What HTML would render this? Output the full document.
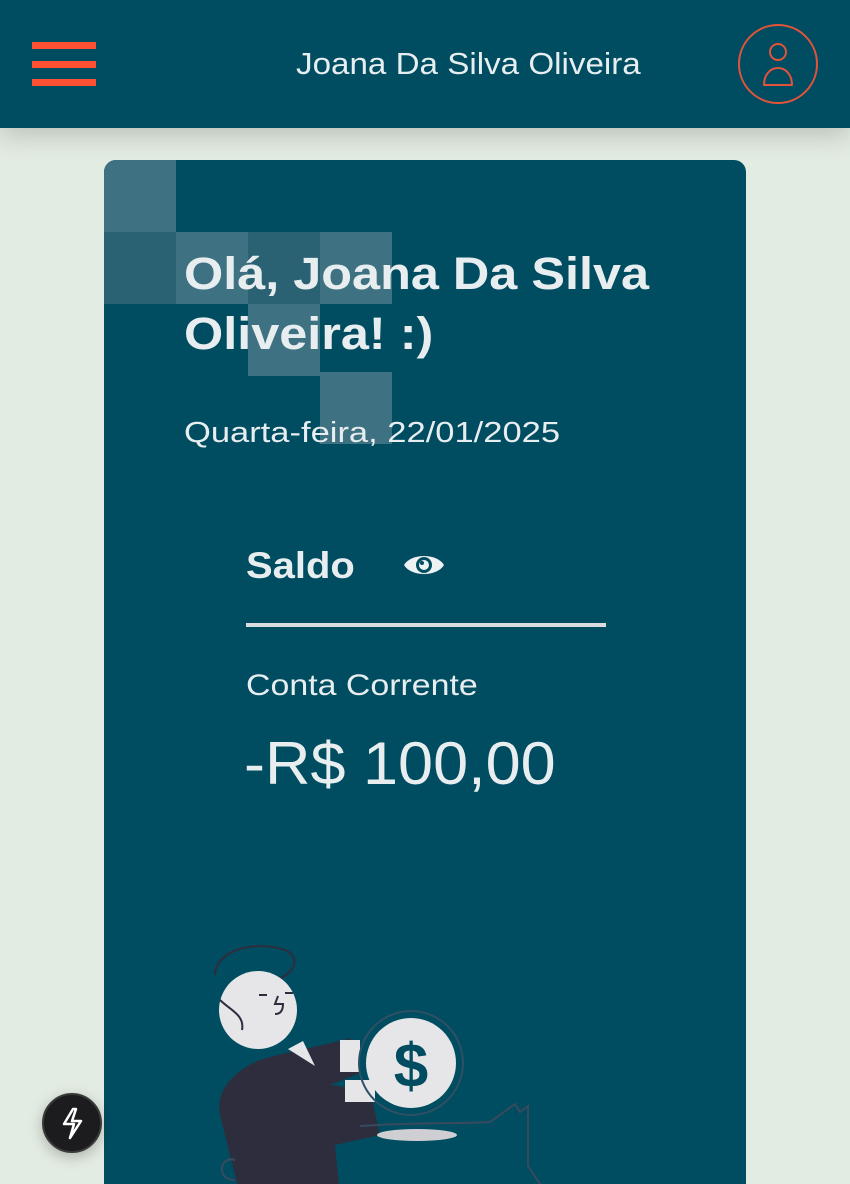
<!DOCTYPE html>
<html><head><meta charset="utf-8"><style>
*{margin:0;padding:0;box-sizing:border-box}
html,body{width:850px;height:1184px;overflow:hidden}
body{background:#e3ece3;font-family:"Liberation Sans",sans-serif;position:relative}
.hdr{position:absolute;left:0;top:0;width:850px;height:128px;background:#004d61;box-shadow:0 8px 24px rgba(0,0,0,.18);z-index:2}
.bar{position:absolute;left:32px;width:64px;height:7px;background:#ff5031}
.name{position:absolute;left:296px;top:46px;color:#e6eef0;font-size:31px;transform:scaleX(1.07);transform-origin:left}
.card{position:absolute;left:104px;top:160px;width:642px;height:1024px;background:#004d61;border-radius:12px 12px 0 0;overflow:hidden}
.sq{position:absolute;width:72px;height:72px}
.l{background:#3e7282}.d{background:#2a6273}
.t{position:absolute;color:#e8eef0;white-space:nowrap;transform-origin:left}
</style></head><body>
<div class="hdr">
<div class="bar" style="top:42px"></div><div class="bar" style="top:61px"></div><div class="bar" style="top:79px"></div>
<div class="name">Joana Da Silva Oliveira</div>
<svg style="position:absolute;left:737px;top:23px" width="82" height="82" viewBox="0 0 82 82" fill="none" stroke="#e2533a" stroke-width="2"><circle cx="41" cy="41" r="39"/><circle cx="41" cy="29" r="8"/><path d="M27 62c0-10 6-17 14-17s14 7 14 17z" stroke-linejoin="round"/></svg>
</div>
<div class="card">
<div class="sq l" style="left:0;top:0"></div>
<div class="sq d" style="left:0;top:72px"></div>
<div class="sq l" style="left:72px;top:72px"></div>
<div class="sq d" style="left:144px;top:72px"></div>
<div class="sq l" style="left:216px;top:72px"></div>
<div class="sq l" style="left:144px;top:144px"></div>
<div class="sq l" style="left:216px;top:212px"></div>
<div class="t" style="left:80px;top:84px;font-size:45px;font-weight:bold;line-height:60px;transform:scaleX(1.12)">Olá, Joana Da Silva<br>Oliveira! :)</div>
<div class="t" style="left:80px;top:257px;font-size:29px;transform:scaleX(1.19)">Quarta-feira, 22/01/2025</div>
<div class="t" style="left:142px;top:385px;font-size:37px;font-weight:bold;transform:scaleX(1.08)">Saldo</div>
<svg style="position:absolute;left:299px;top:390px" width="42" height="30" viewBox="0 0 42 30"><path d="M1 15C8 3 34 3 41 15C34 27 8 27 1 15Z" fill="#eef2f3"/><circle cx="21" cy="15" r="8" fill="#004d61"/><circle cx="21" cy="15" r="5" fill="#eef2f3"/><circle cx="19" cy="13" r="2" fill="#004d61"/></svg>
<div style="position:absolute;left:142px;top:463px;width:360px;height:4px;background:#d9dde0"></div>
<div class="t" style="left:142px;top:509px;font-size:30px;transform:scaleX(1.13)">Conta Corrente</div>
<div class="t" style="left:140px;top:569px;font-size:60px;transform:scaleX(1.05)">-R$ 100,00</div>
<svg style="position:absolute;left:76px;top:760px" width="380" height="264" viewBox="180 920 380 264">
<path d="M215 975c0-25 40-35 70-25c20 8 5 30-15 30" fill="none" stroke="#2e2d3e" stroke-width="2"/>
<circle cx="258" cy="1010" r="39" fill="#e6e6e8"/>
<path d="M220 1000c10 10 25 15 22 30" fill="none" stroke="#2e2d3e" stroke-width="2"/>
<path d="M259 995h8M285 993h8M278 996l-3 8h8c0 8-4 10-8 10" fill="none" stroke="#2e2d3e" stroke-width="2"/>
<path d="M260 1060c25-8 55-12 90-22l10 35l-30 12l40 5l10 45l-45 10l5 50h-100l-20-80c-5-25 15-45 40-55z" fill="#2e2d3e"/>
<path d="M288 1049l15-8l12 25z" fill="#e6e6e8"/>
<path d="M340 1040h20v32h-20zM345 1080h30v22h-30z" fill="#e6e6e8"/>
<circle cx="411" cy="1063" r="52" fill="none" stroke="#2f4f64" stroke-width="2"/>
<circle cx="411" cy="1063" r="45" fill="#e6e6e8"/>
<text x="411" y="1087" text-anchor="middle" font-family="Liberation Sans" font-weight="bold" font-size="62" fill="#004d61">$</text>
<ellipse cx="417" cy="1135" rx="40" ry="6" fill="#cfcfd3"/>
<path d="M360 1126c60-4 100-2 130-4l25-18l5 8l8-6v60l20 30M235 1160c-15-5-20 20 0 20" fill="none" stroke="#394a5e" stroke-width="2"/>
</svg>
</div>
<div style="position:absolute;left:42px;top:1093px;width:60px;height:60px;border-radius:50%;background:#1c1c1e;border:2px solid #3a3a3a;box-shadow:0 4px 14px rgba(0,0,0,.25)"></div>
<svg style="position:absolute;left:58px;top:1106px" width="28" height="34" viewBox="0 0 28 34"><path d="M15 3L6 18h10l-4 14l11-17H14l4-12z" fill="none" stroke="#fff" stroke-width="2.5" stroke-linejoin="round"/></svg>
</body></html>
